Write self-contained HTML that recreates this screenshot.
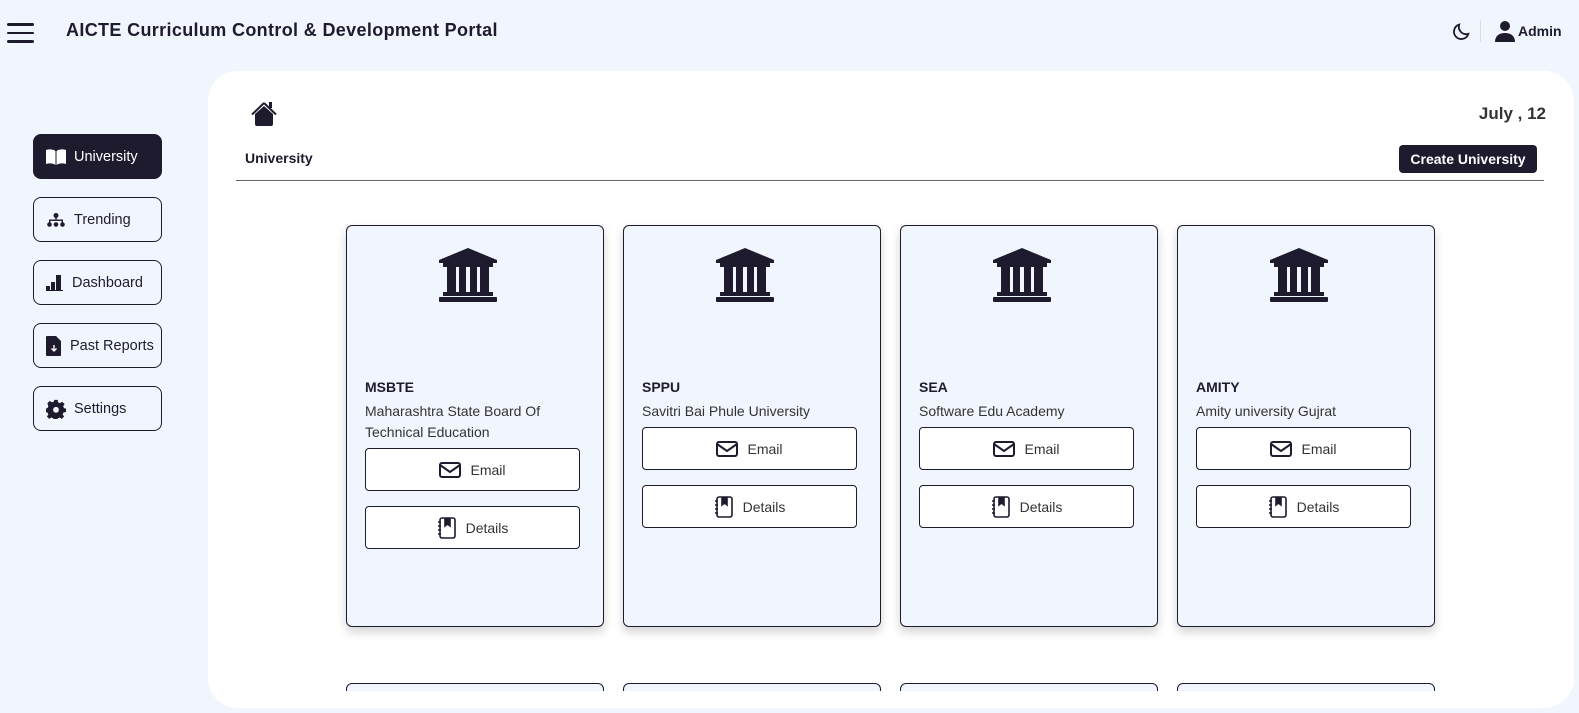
<!DOCTYPE html>
<html><head><meta charset="utf-8"><style>
*{box-sizing:border-box;margin:0;padding:0}
body{width:1579px;height:713px;overflow:hidden;background:#f1f5fd;font-family:"Liberation Sans",sans-serif;color:#1e1b2e;position:relative}
.hdr-title{position:absolute;left:66px;top:20px;font-size:18px;letter-spacing:.35px;font-weight:bold;color:#1e1b2e}
.burger{position:absolute;left:7px;top:23px;width:27px}
.burger i{display:block;height:2.5px;background:#1e1b2e;margin-bottom:6px;border-radius:2px}
.side{position:absolute;left:33px;width:129px;height:45px;border:1px solid #1e1b2e;border-radius:8px;font-size:14.5px;display:flex;align-items:center;padding-left:12px;gap:8px;color:#1e1b2e}
.side.act{background:#1e1b2e;color:#fff}
.panel{position:absolute;left:208px;top:71px;width:1366px;height:637px;background:#fff;border-radius:30px;overflow:hidden}
.card{position:absolute;top:154px;width:258px;height:402px;background:#f1f5fd;border:1px solid #1e1b2e;border-radius:6px;box-shadow:0 5px 10px rgba(0,0,0,.18)}
.card .ic{position:absolute;left:92px;top:22px}
.card h4{position:absolute;left:18px;top:153px;font-size:14px}
.card p{position:absolute;left:18px;top:175px;font-size:14px;line-height:21px;color:#333;width:220px}
.btn{position:absolute;left:18px;width:215px;height:43px;border:1px solid #1e1b2e;border-radius:4px;background:#fff;display:flex;align-items:center;justify-content:center;gap:9px;font-size:14px;color:#333}
.card2{position:absolute;top:612px;width:258px;height:40px;border:1px solid #1e1b2e;border-radius:6px;background:#f1f5fd}
</style></head><body>
<div class="burger"><i></i><i></i><i></i></div>
<div class="hdr-title">AICTE Curriculum Control &amp; Development Portal</div>
<svg style="position:absolute;left:1450px;top:21px" width="22" height="22" viewBox="0 0 24 24" fill="none" stroke="#1e1b2e" stroke-width="2"><path d="M20 14A8 8 0 0 1 10 4a8 8 0 1 0 10 10z"/></svg>
<div style="position:absolute;left:1480px;top:20px;width:1px;height:22px;background:#ddd"></div>
<svg style="position:absolute;left:1494px;top:20px" width="22" height="22" viewBox="0 0 22 22" fill="#1e1b2e"><circle cx="11" cy="6" r="5"/><path d="M1 22c0-6 4-9 10-9s10 3 10 9z"/></svg>
<div style="position:absolute;left:1518px;top:23px;font-size:14px;font-weight:bold">Admin</div>

<div class="side act" style="top:134px"><svg width="20" height="16" viewBox="0 0 20 16" fill="#fff"><path d="M0 1c3-1 7-1 9.5 1v14C7 14 3 14 0 15zM20 1c-3-1-7-1-9.5 1v14c2.5-2 6.5-2 9.5-1z"/></svg>University</div>
<div class="side" style="top:197px"><svg width="20" height="14" viewBox="0 0 20 14" fill="#1e1b2e"><circle cx="10" cy="2.5" r="2.5"/><rect x="9.3" y="4" width="1.4" height="4"/><rect x="3" y="6.5" width="14" height="1.4"/><rect x="3" y="6.5" width="1.4" height="4"/><rect x="15.6" y="6.5" width="1.4" height="4"/><circle cx="3.5" cy="11.5" r="2.3"/><circle cx="10" cy="11.5" r="2.3"/><circle cx="16.5" cy="11.5" r="2.3"/></svg>Trending</div>
<div class="side" style="top:260px"><svg width="18" height="16" viewBox="0 0 18 16" fill="#1e1b2e"><rect x="0" y="11" width="4" height="5"/><rect x="5" y="7" width="4" height="9"/><rect x="10" y="0" width="5" height="16"/><rect x="0" y="15" width="17" height="1"/></svg>Dashboard</div>
<div class="side" style="top:323px"><svg width="16" height="20" viewBox="0 0 16 20"><path d="M1 0h9l5 5v14a1 1 0 0 1-1 1H1a1 1 0 0 1-1-1V1a1 1 0 0 1 1-1z" fill="#1e1b2e"/><path d="M8 9v6M5.5 12.5L8 15l2.5-2.5" stroke="#fff" stroke-width="1.4" fill="none"/></svg>Past Reports</div>
<div class="side" style="top:386px"><svg width="20" height="20" viewBox="0 0 24 24" fill="#1e1b2e"><path d="M10 1h4l.6 3 2.3 1 2.6-1.7 2.8 2.8L20.6 8.7l1 2.3 2.4.6v4l-3 .6-1 2.3 1.7 2.6-2.8 2.8-2.6-1.7-2.3 1-.6 3h-4l-.6-3-2.3-1-2.6 1.7-2.8-2.8 1.7-2.6-1-2.3-3-.6v-4l3-.6 1-2.3L1.7 5.1 4.5 2.3 7.1 4l2.3-1z"/><circle cx="12" cy="13" r="3.5" fill="#f1f5fd"/></svg>Settings</div>

<div class="panel">
<svg style="position:absolute;left:43px;top:30px" width="26" height="25" viewBox="0 0 26 25"><path d="M13 2L1 13.5" stroke="#1e1b2e" stroke-width="2"/><path d="M13 2l12 11.5" stroke="#1e1b2e" stroke-width="2"/><path d="M4 13L13 5l9 8v10a2 2 0 0 1-2 2H6a2 2 0 0 1-2-2z" fill="#1e1b2e"/><rect x="18" y="1" width="3" height="6" fill="#1e1b2e"/></svg>
<div style="position:absolute;right:28px;top:33px;font-size:17px;font-weight:bold;color:#333">July , 12</div>
<div style="position:absolute;left:37px;top:79px;font-size:14px;font-weight:bold">University</div>
<div style="position:absolute;left:1191px;top:74px;width:138px;height:28px;background:#1e1b2e;color:#fff;border-radius:4px;font-size:14px;font-weight:bold;text-align:center;line-height:28px">Create University</div>
<div style="position:absolute;left:28px;top:109px;width:1308px;height:1px;background:#666"></div>

<div style="position:absolute;left:0;top:0;width:1366px;height:620px;overflow:hidden">
<div class="card" style="left:138px"><svg class="ic" width="58" height="54" viewBox="0 0 58 54" fill="#1e1b2e"><path d="M29 0L0 12v3h58v-3z"/><rect x="4" y="15" width="50" height="4"/><rect x="8" y="19" width="9" height="25"/><rect x="20" y="19" width="7" height="25"/><rect x="31" y="19" width="7" height="25"/><rect x="41" y="19" width="9" height="25"/><rect x="4" y="44" width="50" height="4"/><rect x="0" y="49" width="58" height="5" rx="1"/></svg><h4>MSBTE</h4><p>Maharashtra State Board Of Technical Education</p>
<div class="btn" style="top:222px"><svg width="22" height="16" viewBox="0 0 22 16" fill="none" stroke="#1e1b2e" stroke-width="2"><rect x="1" y="1" width="20" height="14" rx="2"/><path d="M1 3l10 7 10-7"/></svg>Email</div>
<div class="btn" style="top:280px"><svg width="20" height="22" viewBox="0 0 20 22" fill="none" stroke="#1e1b2e" stroke-width="1.6"><rect x="3" y="1" width="15" height="20" rx="2"/><path d="M8 1v8l2.5-2 2.5 2V1" fill="#1e1b2e"/><path d="M1 5h3M1 9h3M1 13h3M1 17h3"/></svg>Details</div></div>
<div class="card" style="left:415px"><svg class="ic" width="58" height="54" viewBox="0 0 58 54" fill="#1e1b2e"><path d="M29 0L0 12v3h58v-3z"/><rect x="4" y="15" width="50" height="4"/><rect x="8" y="19" width="9" height="25"/><rect x="20" y="19" width="7" height="25"/><rect x="31" y="19" width="7" height="25"/><rect x="41" y="19" width="9" height="25"/><rect x="4" y="44" width="50" height="4"/><rect x="0" y="49" width="58" height="5" rx="1"/></svg><h4>SPPU</h4><p>Savitri Bai Phule University</p>
<div class="btn" style="top:201px"><svg width="22" height="16" viewBox="0 0 22 16" fill="none" stroke="#1e1b2e" stroke-width="2"><rect x="1" y="1" width="20" height="14" rx="2"/><path d="M1 3l10 7 10-7"/></svg>Email</div>
<div class="btn" style="top:259px"><svg width="20" height="22" viewBox="0 0 20 22" fill="none" stroke="#1e1b2e" stroke-width="1.6"><rect x="3" y="1" width="15" height="20" rx="2"/><path d="M8 1v8l2.5-2 2.5 2V1" fill="#1e1b2e"/><path d="M1 5h3M1 9h3M1 13h3M1 17h3"/></svg>Details</div></div>
<div class="card" style="left:692px"><svg class="ic" width="58" height="54" viewBox="0 0 58 54" fill="#1e1b2e"><path d="M29 0L0 12v3h58v-3z"/><rect x="4" y="15" width="50" height="4"/><rect x="8" y="19" width="9" height="25"/><rect x="20" y="19" width="7" height="25"/><rect x="31" y="19" width="7" height="25"/><rect x="41" y="19" width="9" height="25"/><rect x="4" y="44" width="50" height="4"/><rect x="0" y="49" width="58" height="5" rx="1"/></svg><h4>SEA</h4><p>Software Edu Academy</p>
<div class="btn" style="top:201px"><svg width="22" height="16" viewBox="0 0 22 16" fill="none" stroke="#1e1b2e" stroke-width="2"><rect x="1" y="1" width="20" height="14" rx="2"/><path d="M1 3l10 7 10-7"/></svg>Email</div>
<div class="btn" style="top:259px"><svg width="20" height="22" viewBox="0 0 20 22" fill="none" stroke="#1e1b2e" stroke-width="1.6"><rect x="3" y="1" width="15" height="20" rx="2"/><path d="M8 1v8l2.5-2 2.5 2V1" fill="#1e1b2e"/><path d="M1 5h3M1 9h3M1 13h3M1 17h3"/></svg>Details</div></div>
<div class="card" style="left:969px"><svg class="ic" width="58" height="54" viewBox="0 0 58 54" fill="#1e1b2e"><path d="M29 0L0 12v3h58v-3z"/><rect x="4" y="15" width="50" height="4"/><rect x="8" y="19" width="9" height="25"/><rect x="20" y="19" width="7" height="25"/><rect x="31" y="19" width="7" height="25"/><rect x="41" y="19" width="9" height="25"/><rect x="4" y="44" width="50" height="4"/><rect x="0" y="49" width="58" height="5" rx="1"/></svg><h4>AMITY</h4><p>Amity university Gujrat</p>
<div class="btn" style="top:201px"><svg width="22" height="16" viewBox="0 0 22 16" fill="none" stroke="#1e1b2e" stroke-width="2"><rect x="1" y="1" width="20" height="14" rx="2"/><path d="M1 3l10 7 10-7"/></svg>Email</div>
<div class="btn" style="top:259px"><svg width="20" height="22" viewBox="0 0 20 22" fill="none" stroke="#1e1b2e" stroke-width="1.6"><rect x="3" y="1" width="15" height="20" rx="2"/><path d="M8 1v8l2.5-2 2.5 2V1" fill="#1e1b2e"/><path d="M1 5h3M1 9h3M1 13h3M1 17h3"/></svg>Details</div></div>
<div class="card2" style="left:138px"></div><div class="card2" style="left:415px"></div><div class="card2" style="left:692px"></div><div class="card2" style="left:969px"></div>
</div>
</div>
</body></html>
